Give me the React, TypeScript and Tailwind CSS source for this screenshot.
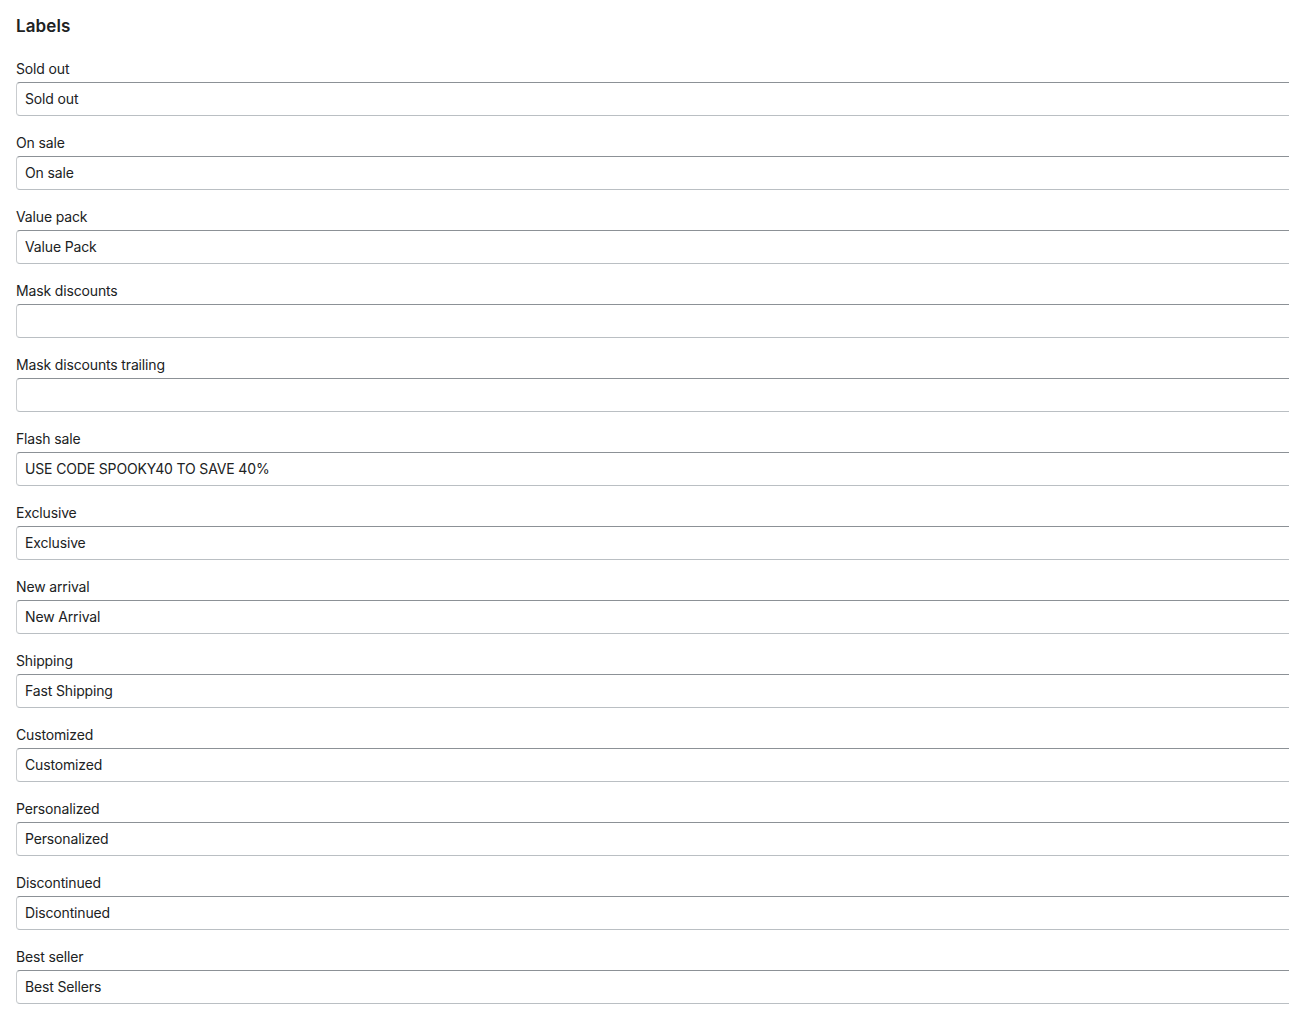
import React from 'react';

const FIELDS: { label: string; value: string }[] = [
  { label: 'Sold out', value: 'Sold out' },
  { label: 'On sale', value: 'On sale' },
  { label: 'Value pack', value: 'Value Pack' },
  { label: 'Mask discounts', value: '' },
  { label: 'Mask discounts trailing', value: '' },
  { label: 'Flash sale', value: 'USE CODE SPOOKY40 TO SAVE 40%' },
  { label: 'Exclusive', value: 'Exclusive' },
  { label: 'New arrival', value: 'New Arrival' },
  { label: 'Shipping', value: 'Fast Shipping' },
  { label: 'Customized', value: 'Customized' },
  { label: 'Personalized', value: 'Personalized' },
  { label: 'Discontinued', value: 'Discontinued' },
  { label: 'Best seller', value: 'Best Sellers' },
];

export default function App() {
  return (
    <div
      className="w-screen overflow-hidden bg-white text-[#202223]"
      style={{ fontFamily: 'Inter, "Liberation Sans", sans-serif' }}
    >
      <div className="w-[1320px] pl-4 pt-[14px] pb-6">
        <h2 className="text-[17px] leading-6 font-semibold mb-5 tracking-[0.1px]">Labels</h2>
        {FIELDS.map((f) => (
          <div key={f.label} className="mb-4">
            <label className="block text-sm leading-5 pt-[1px] mb-[3px] tracking-[-0.15px]">{f.label}</label>
            <input
              type="text"
              defaultValue={f.value}
              className="block w-full h-[34px] px-2 pb-[2px] text-sm tracking-[-0.15px] text-[#202223] bg-white rounded-[4px] border border-[#c9cccf] border-t-[#8c9196] border-b-[#babfc3] outline-none"
            />
          </div>
        ))}
      </div>
    </div>
  );
}
